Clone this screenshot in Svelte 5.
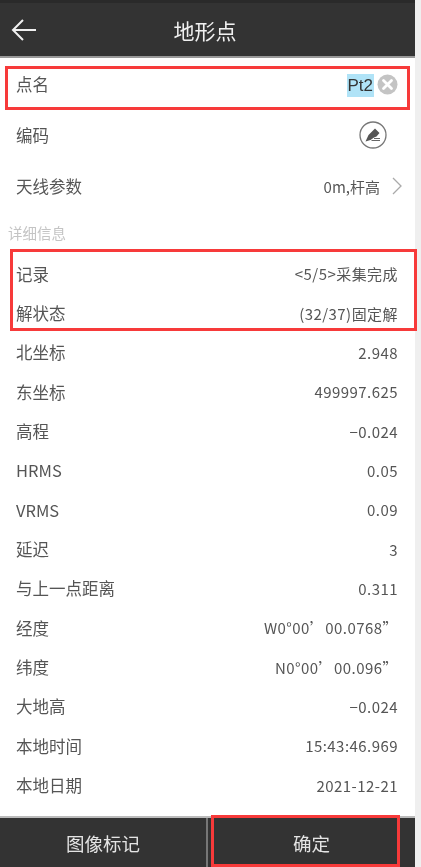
<script>
  const rows = [
    ["记录", "<5/5>采集完成"],
    ["解状态", "(32/37)固定解"],
    ["北坐标", "2.948"],
    ["东坐标", "499997.625"],
    ["高程", "−0.024"],
    ["HRMS", "0.05"],
    ["VRMS", "0.09"],
    ["延迟", "3"],
    ["与上一点距离", "0.311"],
    ["经度", "W0°00’00.0768”"],
    ["纬度", "N0°00’00.096”"],
    ["大地高", "−0.024"],
    ["本地时间", "15:43:46.969"],
    ["本地日期", "2021-12-21"],
  ];
</script>

<div class="page">
  <div class="screen">
    <header class="bar">
      <button class="back" aria-label="返回">
        <svg width="26" height="22" viewBox="0 0 26 22" fill="none" stroke="#f0f0f0" stroke-width="2">
          <path d="M25 11H2M12 1L2 11l10 10" />
        </svg>
      </button>
      <h1>地形点</h1>
    </header>

    <div class="top">
      <div class="row name">
        <span>点名</span>
        <span class="input">
          <span class="sel">Pt2</span>
          <svg width="21" height="21" viewBox="0 0 21 21">
            <circle cx="10.500" cy="10.500" r="10" fill="#c4c4c4" />
            <path d="M6.500 6.500l8 8M14.500 6.500l-8 8" stroke="#fff" stroke-width="2.800" stroke-linecap="round" />
          </svg>
        </span>
      </div>
      <div class="row code">
        <span>编码</span>
        <svg class="pen" width="28" height="28" viewBox="0 0 28 28" fill="none">
          <circle cx="14" cy="14" r="13" stroke="#777" stroke-width="1.300" />
          <path d="M6.500 20.500l3-6.500 6.500-6.500 4.500 4.500-3 3.500-2.500 1-3.500 2.500z" fill="#555" />
          <path d="M12.500 19.500h8.500M15 17.500h6" stroke="#666" stroke-width="1.100" />
        </svg>
      </div>
      <div class="row antenna">
        <span>天线参数</span>
        <span class="value">0m,杆高
          <svg width="10" height="18" viewBox="0 0 10 18" fill="none" stroke="#aaa" stroke-width="1.300">
            <path d="M1 1l8 8-8 8" />
          </svg>
        </span>
      </div>
    </div>

    <div class="section">详细信息</div>

    <div class="list">
      {#each rows as r}
        <div class="item">
          <span class="label">{r[0]}</span>
          <span class="val">{r[1]}</span>
        </div>
      {/each}
    </div>

    <footer class="foot">
      <button>图像标记</button>
      <button>确定</button>
    </footer>
  </div>

  <!-- red annotation boxes drawn over the screenshot -->
  <div class="mark m1"></div>
  <div class="mark m2"></div>
  <div class="mark m3"></div>
</div>

<style>
  :global(body) {
    margin: 0;
    background: #efefef;
  }

  .page {
    position: relative;
    width: 421px;
    height: 867px;
    overflow: hidden;
    font-family: "Noto Sans CJK SC", "Liberation Sans", sans-serif;
    color: #555;
    font-size: 16.500px;
  }

  /* the reference is an upscaled phone capture, slightly soft */
  .screen {
    width: 415px;
    height: 867px;
    background: #fff;
    display: flex;
    flex-direction: column;
    filter: blur(0.4px);
  }

  .bar {
    height: 58px;
    flex: none;
    box-sizing: border-box;
    background: #333;
    border-top: 3px solid #2a2a2a;
    border-bottom: 2px solid #999;
    display: flex;
    align-items: center;
    position: relative;
  }

  .back {
    background: none;
    border: 0;
    padding: 0 0 0 11px;
    height: 40px;
    display: flex;
    align-items: center;
  }

  h1 {
    margin: 0;
    position: absolute;
    left: 0;
    right: 5px;
    text-align: center;
    font-size: 21px;
    font-weight: 400;
    color: #f0f0f0;
    line-height: 56px;
    top: -1px;
    pointer-events: none;
  }

  .top {
    padding-top: 1px;
  }

  .row {
    display: flex;
    align-items: center;
    justify-content: space-between;
    padding: 0 17px 0 16px;
  }

  .name {
    height: 50px;
  }

  .code {
    height: 51px;
    padding-right: 28px;
  }

  .antenna {
    height: 52px;
    padding-right: 13px;
  }

  .input {
    display: flex;
    align-items: center;
    gap: 3px;
  }

  .sel {
    background: #b0e3f7;
    color: #333;
    line-height: 23px;
    padding: 0 1px 0 0;
    font-family: "Liberation Sans", sans-serif;
    font-size: 17px;
    transform: translateY(1px);
  }

  .value {
    display: flex;
    align-items: center;
    gap: 12px;
    font-size: 15px;
  }

  .section {
    font-size: 14.500px;
    color: #c4c4c4;
    padding-left: 8px;
    line-height: 20px;
    margin-top: 11px;
    height: 20px;
  }

  .list {
    margin-top: 11px;
    display: flex;
    flex-direction: column;
    flex: 1;
  }

  .item {
    height: 39.350px;
    flex: none;
    display: flex;
    align-items: center;
    justify-content: space-between;
    padding: 0 17px 0 16px;
  }

  .val {
    font-size: 15px;
    letter-spacing: 0.450px;
  }

  .foot {
    margin-top: auto;
    height: 51px;
    flex: none;
    box-sizing: border-box;
    background: #333;
    border-top: 2px solid #bbb;
    display: flex;
  }

  .foot button {
    flex: 1;
    background: none;
    border: 0;
    padding: 0;
    font: inherit;
    font-size: 18.500px;
    color: #e4e4e4;
  }

  .foot button:first-child {
    flex: 0 0 208px;
    border-right: 2px solid #777;
  }

  .mark {
    position: absolute;
    box-sizing: border-box;
    border: 3px solid #f73a3a;
  }

  .m1 {
    left: 5px;
    top: 66px;
    width: 405px;
    height: 44px;
  }

  .m2 {
    left: 10px;
    top: 249px;
    width: 407px;
    height: 82px;
  }

  .m3 {
    left: 211px;
    top: 815px;
    width: 189px;
    height: 52px;
  }
</style>
